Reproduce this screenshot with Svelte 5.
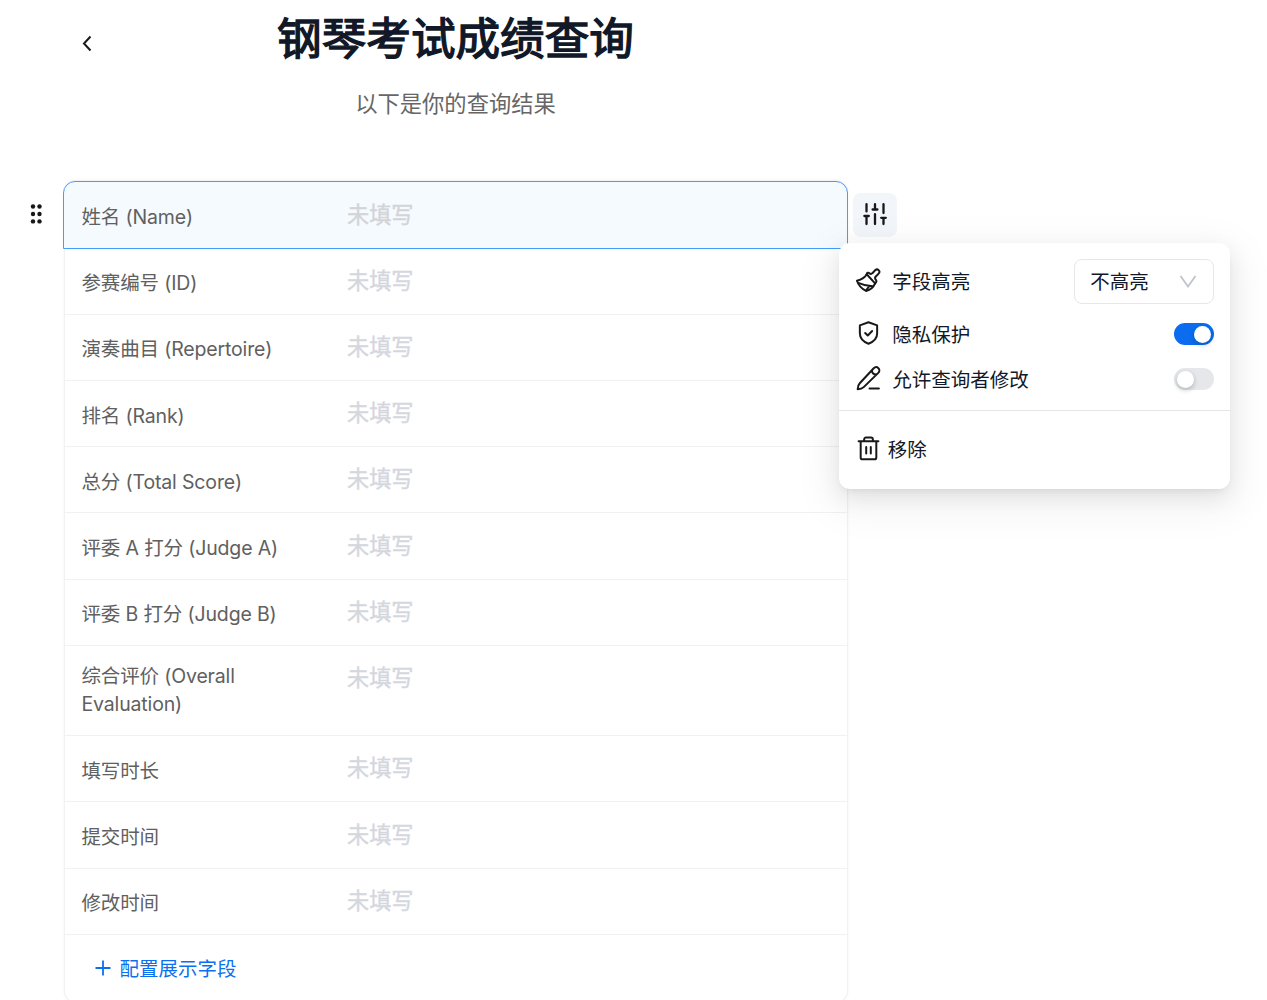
<script>
  const fields = [
    '姓名 (Name)',
    '参赛编号 (ID)',
    '演奏曲目 (Repertoire)',
    '排名 (Rank)',
    '总分 (Total Score)',
    '评委 A 打分 (Judge A)',
    '评委 B 打分 (Judge B)',
    '综合评价 (Overall Evaluation)',
    '填写时长',
    '提交时间',
    '修改时间'
  ];
  let selected = $state(0);
  let privacy = $state(true);
  let editable = $state(false);
</script>

<main>
  <header>
    <button class="back" aria-label="返回">
      <svg width="12" height="18" viewBox="0 0 12 18" fill="none" stroke="currentColor" stroke-width="2"><path d="M10.500 2.500 4 9.500l6.500 7" /></svg>
    </button>
    <div class="heading">
      <h1>钢琴考试成绩查询</h1>
      <p>以下是你的查询结果</p>
    </div>
  </header>

  <div class="editor">
    <div class="handle">
      <svg width="13" height="20" viewBox="0 0 13 20" fill="#18181a">
        {#each [2.5, 10, 17.4] as cy}
          <circle cx="3" {cy} r="2.2" /><circle cx="9.500" {cy} r="2.2" />
        {/each}
      </svg>
    </div>

    <section class="card">
      {#each fields as name, i}
        <!-- svelte-ignore a11y_click_events_have_key_events, a11y_no_static_element_interactions -->
        <div class="row" class:selected={selected === i} class:tall={name.length > 20} onclick={() => (selected = i)}>
          <div class="label">{name}</div>
          <div class="value">未填写</div>
        </div>
      {/each}
      <button class="add">
        <svg width="16" height="16" viewBox="0 0 16 16" fill="none" stroke="currentColor" stroke-width="1.8"><path d="M8 .5v15M.5 8h15" /></svg>
        <span>配置展示字段</span>
      </button>
    </section>

    <aside class="tools">
      <button class="settings" aria-label="设置">
        <svg width="24" height="24" viewBox="0 0 24 24" fill="none" stroke="#18181a" stroke-width="2.3" stroke-linecap="round" stroke-linejoin="round">
          <path d="M3.500 2.200v7.200M3.500 14v8M1.400 14h4.400M12 2.200v5.300M12 12.200V22M9.600 7.500h4.800M20.500 2.200v8.900M20.500 15.800V22M18.200 15.800h4.600" />
        </svg>
      </button>

      <div class="menu">
        <div class="options">
          <div class="option first">
            <svg class="icon" viewBox="0 0 24 24">
              <path d="M10.300 6c-1.300 2.400-5 5-9.400 6.200C2.400 16.600 5.500 20 9.700 22c3.700-.8 7-3.300 8.600-7.200" />
              <path d="m10.300 6 8 8.800M2.800 14.500c4 1.800 8.300 2.900 13.200 3M9.700 21.500l3-4" />
              <path d="M10.300 6c.1-1.500 1.500-1.900 2.600-.9 1 .9 2 .8 2.800-.1l2.700-2.800c2.300-2.300 5.500.9 3.300 3.200L19 8.200c-.9.900-1 1.700-.2 2.700 1.300 1.500.9 2.900-.5 3.900" />
            </svg>
            <span>字段高亮</span>
            <button class="select"><b>不高亮</b>
              <svg width="18" height="13" viewBox="0 0 18 13" fill="none" stroke="#bfc5cd" stroke-width="1.800"><path d="m1.500 1 7.500 10.500L16.500 1" /></svg>
            </button>
          </div>
          <div class="option">
            <svg class="icon" viewBox="0 0 24 24">
              <path d="m12 1.200 8.300 3v7.600c0 4.800-3.300 8.200-8.300 10-5-1.800-8.300-5.200-8.300-10V4.200l8.300-3Z" /><path d="m8.800 11.500 2.500 2.400 4.200-4.300" />
            </svg>
            <span>隐私保护</span>
            <button class="switch" class:on={privacy} aria-label="隐私保护" onclick={() => (privacy = !privacy)}></button>
          </div>
          <div class="option">
            <svg class="icon" viewBox="0 0 24 24">
              <path d="M17 2.200c1.400-1.400 3.300-1.300 4.500-.1s1.300 3.100-.1 4.500L7.400 20.300c-1.300 1.300-3.400 2-5.800 2.100.1-2.400.7-4.500 2-5.800L17 2.200ZM15.500 4c-.6 2.300 1.300 4.200 3.800 4.200M13 21.500h9" />
            </svg>
            <span>允许查询者修改</span>
            <button class="switch" class:on={editable} aria-label="允许查询者修改" onclick={() => (editable = !editable)}></button>
          </div>
        </div>
        <button class="remove">
          <svg class="icon" viewBox="0 0 24 24">
            <path d="M2.500 5h19M4.500 5v15.600c0 1.100.7 1.800 1.800 1.800h11.400c1.100 0 1.800-.7 1.800-1.800V5M7.800 4.800V3.400c0-1.200.7-1.900 1.800-1.900h4.800c1.100 0 1.800.7 1.800 1.900v1.400M9.800 10.600v6.300M14.200 10.600v6.300" />
          </svg>
          移除
        </button>
      </div>
    </aside>
  </div>
</main>

<style>
  :global(body) {
    background: #fff;
    overflow: hidden;
  }
  main {
    width: 1267px;
    height: 1000px;
    overflow: hidden;
    box-sizing: border-box;
    font-family: Inter, 'Noto Sans CJK SC', sans-serif;
    font-size: 19.5px;
    color: #111827;
  }
  button {
    font: inherit;
    color: inherit;
    background: none;
    border: 0;
    padding: 0;
    cursor: pointer;
  }
  svg { display: block; flex: none; }
  header {
    height: 181px;
    display: flex;
    width: 848px;
  }
  .back {
    width: 12px;
    height: 18px;
    margin-top: 34px;
    padding-left: 80px;
    box-sizing: content-box;
    color: #18181a;
  }
  .heading {
    flex: 1;
    margin-left: -29px;
    text-align: center;
  }
  h1 {
    margin: 8px 0 0;
    font-size: 44.6px;
    line-height: 62px;
    font-weight: 400;
    -webkit-text-stroke: 1.4px currentColor;
  }
  p {
    margin: 17px 0 0;
    font-size: 22.3px;
    line-height: 34px;
    color: #666;
  }
  .editor {
    display: flex;
    align-items: flex-start;
  }
  .handle {
    width: 35px;
    padding: 23px 0 0 30px;
  }
  .card {
    width: 782px;
    border-radius: 11px;
    box-shadow: 0 0 0 1px #f2f2f3, 0 0 4px rgba(0, 0, 0, 0.07);
  }
  .row {
    display: flex;
    height: 66.3px;
    box-sizing: border-box;
    border-bottom: 1px solid #f1f1f2;
    padding: 0 16.5px;
    color: #606060;
  }
  .row.selected {
    height: 68px;
    margin: 0 -1px -0.8px -2px;
    padding: 0 16.5px 0 17.5px;
    border: 1px solid #459cff;
    border-radius: 12px 12px 0 0;
    background: #f5faff;
    position: relative;
  }
  .row.tall { height: 90px; }
  .label {
    width: 225.5px;
    padding: 20.8px 40px 0 0;
    line-height: 28px;
    letter-spacing: -0.15px;
    box-sizing: content-box;
  }
  .tall .label {
    width: 190px;
    padding: 16.5px 75.5px 0 0;
  }
  .value {
    padding-top: 16.3px;
    font-size: 22.2px;
    line-height: 32px;
    color: #d4d7de;
    -webkit-text-stroke: 0.4px currentColor;
  }
  .selected .value {
    padding-top: 17px;
    color: #d2d4d7;
  }
  .add {
    display: flex;
    align-items: center;
    gap: 9px;
    width: 100%;
    height: 67px;
    padding-left: 29.5px;
    color: #0b70f0;
  }
  .add span { padding-bottom: 2.5px; }
  .tools {
    position: relative;
    padding: 11.5px 0 0 5.5px;
  }
  .settings {
    display: grid;
    place-items: center;
    width: 44px;
    height: 44px;
    padding-bottom: 2px;
    border-radius: 8px;
    background: #f2f5f9;
  }
  .menu {
    position: absolute;
    left: -7.700px;
    top: 61.5px;
    width: 391px;
    height: 246px;
    border-radius: 11px;
    background: #fff;
    box-shadow: 0 8px 22px rgba(0, 0, 0, 0.08), 0 12px 39px 11px rgba(0, 0, 0, 0.05), 0 4px 8px -5px rgba(0, 0, 0, 0.12);
  }
  .options {
    height: 168px;
    box-sizing: border-box;
    padding: 16px 16.500px 0;
    border-bottom: 1px solid #e4e5e7;
  }
  .option {
    display: flex;
    align-items: center;
    height: 45px;
  }
  .option.first { margin-bottom: 8px; }
  .option span {
    flex: 1;
    margin-left: 11.5px;
    padding-bottom: 2px;
  }
  .icon {
    width: 25px;
    height: 25px;
    margin-bottom: 2px;
    fill: none;
    stroke: #18181a;
    stroke-width: 1.9;
    stroke-linecap: round;
    stroke-linejoin: round;
  }
  .select {
    display: flex;
    align-items: center;
    justify-content: space-between;
    width: 140px;
    height: 45px;
    box-sizing: border-box;
    padding: 0 16px 0 15.5px;
    border: 1px solid #e5e7eb;
    border-radius: 8px;
  }
  .select b {
    font-weight: 400;
    padding-bottom: 2px;
  }
  .switch {
    width: 39.500px;
    height: 22.500px;
    box-sizing: border-box;
    border-radius: 12px;
    padding: 2.7px;
    background: #e5e7eb;
  }
  .switch::before {
    content: '';
    display: block;
    width: 17px;
    height: 17px;
    border-radius: 50%;
    background: #fff;
    box-shadow: 0 2px 5px rgba(0, 35, 11, 0.25);
  }
  .switch.on { background: #0b6cf0; }
  .switch.on::before { margin-left: 16.500px; }
  .remove {
    display: flex;
    align-items: center;
    gap: 6.5px;
    width: 100%;
    height: 75px;
    padding-left: 17px;
  }
  .remove .icon { margin-bottom: 0; }
</style>
